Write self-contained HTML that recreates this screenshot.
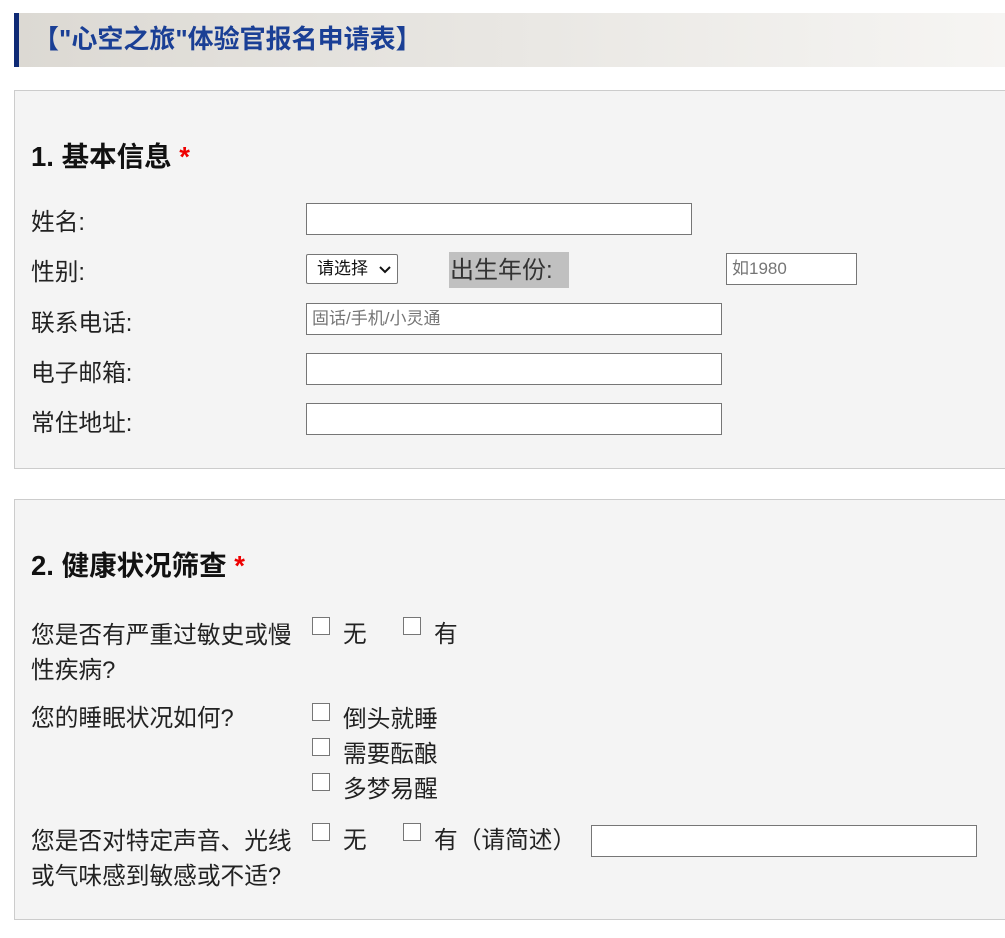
<!DOCTYPE html>
<html><head><meta charset="utf-8"><style>
body{margin:0;width:1005px;height:938px;background:#fff;position:relative;overflow:hidden;font-family:"Liberation Sans","Noto Sans CJK SC",sans-serif;color:#222}
.a{position:absolute;white-space:nowrap}
.hdr{left:14px;top:13px;width:991px;height:54px;background:linear-gradient(90deg,#dcd9d3,#f6f5f3);border-left:5px solid #0e2a75;box-sizing:border-box}
.ttl{left:33px;top:24px;font-size:26px;font-weight:bold;color:#1a3f95;line-height:30px}
.sec{left:14px;width:1000px;background:#f4f4f4;border:1px solid #ccc;box-sizing:border-box}
.h{font-size:27.5px;font-weight:bold;color:#111;line-height:30px}
.h b{color:#e00}
.l{font-size:23.7px;line-height:26px;color:#222;margin-top:2px}
.in{background:#fff;border:1px solid #767676;box-sizing:border-box}
.ph{font-size:17px;color:#757575;line-height:30px;padding-left:5px}
.cb{width:18px;height:18px;background:#fff;border:1px solid #767676;box-sizing:border-box}
</style></head><body>
<div class="a hdr"></div>
<div class="a ttl">【"心空之旅"体验官报名申请表】</div>

<div class="a sec" style="top:90px;height:379px"></div>
<div class="a h" style="left:31px;top:142px">1. 基本信息 <b>*</b></div>
<div class="a l" style="left:31px;top:208px">姓名:</div>
<div class="a in" style="left:306px;top:203px;width:386px;height:32px"></div>
<div class="a l" style="left:31px;top:258px">性别:</div>
<div class="a in" style="left:306px;top:254px;width:92px;height:30px;border-radius:2px;font-size:17px;line-height:28px;padding-left:10px;color:#111">请选择 <svg width="12" height="8" style="position:absolute;left:72px;top:11px"><path d="M1 1L6 6L11 1" fill="none" stroke="#111" stroke-width="2"/></svg></div>
<div class="a" style="left:449px;top:252px;width:120px;height:36px;background:#c0c0c0;font-size:24px;line-height:38px;color:#333;padding-left:1px;box-sizing:border-box">出生年份:</div>
<div class="a in ph" style="left:726px;top:253px;width:131px;height:32px">如1980</div>
<div class="a l" style="left:31px;top:309px">联系电话:</div>
<div class="a in ph" style="left:306px;top:303px;width:416px;height:32px">固话/手机/小灵通</div>
<div class="a l" style="left:31px;top:359px">电子邮箱:</div>
<div class="a in" style="left:306px;top:353px;width:416px;height:32px"></div>
<div class="a l" style="left:31px;top:409px">常住地址:</div>
<div class="a in" style="left:306px;top:403px;width:416px;height:32px"></div>

<div class="a sec" style="top:499px;height:421px"></div>
<div class="a h" style="left:31px;top:551px">2. 健康状况筛查 <b>*</b></div>
<div class="a l" style="left:31px;top:617px;line-height:35px;white-space:normal;width:275px">您是否有严重过敏史或慢<br>性疾病?</div>
<div class="a cb" style="left:312px;top:617px"></div><div class="a l" style="left:343px;top:620px">无</div>
<div class="a cb" style="left:403px;top:617px"></div><div class="a l" style="left:434px;top:620px">有</div>
<div class="a l" style="left:31px;top:704px">您的睡眠状况如何?</div>
<div class="a cb" style="left:312px;top:703px"></div><div class="a l" style="left:343px;top:705px">倒头就睡</div>
<div class="a cb" style="left:312px;top:738px"></div><div class="a l" style="left:343px;top:740px">需要酝酿</div>
<div class="a cb" style="left:312px;top:773px"></div><div class="a l" style="left:343px;top:775px">多梦易醒</div>
<div class="a l" style="left:31px;top:823px;line-height:35px;white-space:normal;width:280px">您是否对特定声音、光线<br>或气味感到敏感或不适?</div>
<div class="a cb" style="left:312px;top:823px"></div><div class="a l" style="left:343px;top:826px">无</div>
<div class="a cb" style="left:403px;top:823px"></div><div class="a l" style="left:434px;top:826px">有（请简述）</div>
<div class="a in" style="left:591px;top:825px;width:386px;height:32px"></div>
</body></html>
